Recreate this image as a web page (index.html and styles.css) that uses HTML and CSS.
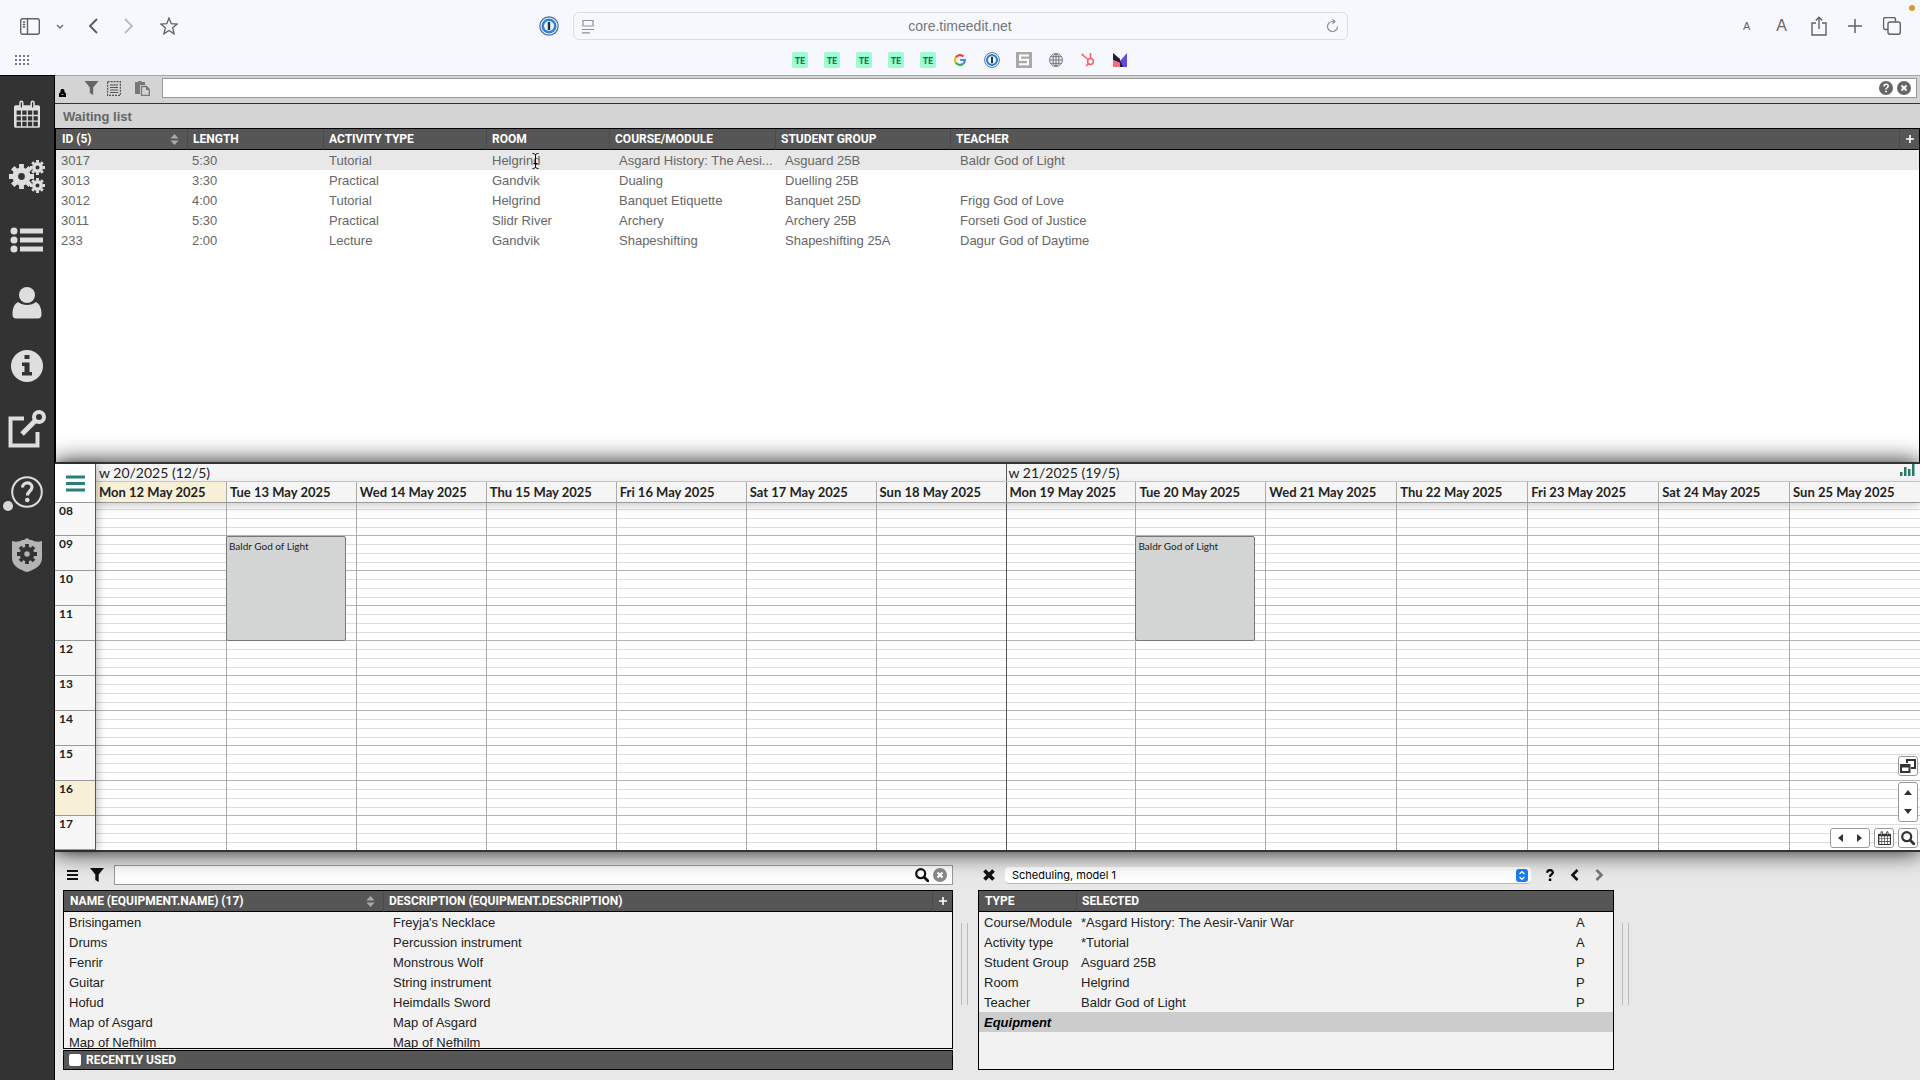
FILE: index.html
```html
<!DOCTYPE html>
<html lang="en">
<head>
  <meta charset="UTF-8" />
  <meta name="viewport" content="width=device-width, initial-scale=1.0"/>
  <title>TimeEdit - Scheduling</title>
  <link rel="stylesheet" href="styles.css">
</head>
<body>
  <!-- Shared icons -->
  <svg class="defs" width="0" height="0" aria-hidden="true">
    <symbol id="i-filter" viewBox="0 0 14 14"><path d="M0 0h14L8.700 6.500V14L5.300 12V6.500z" fill="currentColor"/></symbol>
    <symbol id="i-sort" viewBox="0 0 10 12"><path d="M5 0l4.500 5h-9zM5 12l4.500-5h-9z" fill="currentColor"/></symbol>
    <symbol id="i-plus" viewBox="0 0 8 8"><path d="M4 0v8M0 4h8" stroke="currentColor" stroke-width="1.600"/></symbol>
    <symbol id="i-close" viewBox="0 0 14 14"><circle cx="7" cy="7" r="7" fill="currentColor"/><path d="M4.500 4.500l5 5M9.500 4.500l-5 5" stroke="#fff" stroke-width="2"/></symbol>
    <symbol id="i-search" viewBox="0 0 14 14"><circle cx="5.700" cy="5.700" r="4.500" fill="none" stroke="currentColor" stroke-width="2.200"/><path d="M9 9l4 4" stroke="currentColor" stroke-width="2.800" stroke-linecap="round"/></symbol>
    <symbol id="i-onepass" viewBox="0 0 20 20"><circle cx="10" cy="10" r="9.200" fill="#fff" stroke="#4a6a9a" stroke-width="1.200"/><circle cx="10" cy="10" r="6.300" fill="#eaf4fd" stroke="#2f83d0" stroke-width="2.600"/><path d="M10 6v8" stroke="#1c2f4a" stroke-width="2.400"/></symbol>
    <symbol id="i-cal" viewBox="0 0 30 32">
      <path d="M2 6h4V3a2.500 2.500 0 0 1 5 0v3h8V3a2.500 2.500 0 0 1 5 0v3h4a2 2 0 0 1 2 2v22a2 2 0 0 1-2 2H2a2 2 0 0 1-2-2V8a2 2 0 0 1 2-2z" fill="currentColor"/>
      <path class="hole" d="M3 12h5v5H3zM9.500 12h5v5h-5zM16 12h5v5h-5zM22.500 12h5v5h-5zM3 18.500h5v5H3zM9.500 18.500h5v5h-5zM16 18.500h5v5h-5zM22.500 18.500h5v5h-5zM3 25h5v5H3zM9.500 25h5v5h-5zM16 25h5v5h-5zM22.500 25h5v5h-5zM7.800 2.500h1.400v6H7.800zM20.800 2.500h1.400v6h-1.400z"/>
    </symbol>
    <symbol id="i-gear" viewBox="-12 -12 24 24">
      <circle r="6" fill="none" stroke="currentColor" stroke-width="5.500"/>
      <path d="M0-8v-4M0 8v4M-8 0h-4M8 0h4M5.700-5.700l2.700-2.700M-5.700 5.700l-2.700 2.700M-5.700-5.700l-2.700-2.700M5.700 5.700l2.700 2.700" stroke="currentColor" stroke-width="4.600"/>
    </symbol>
  </svg>

  <!-- Browser bar -->
  <header class="browser">
    <div class="browser-row">
      <div class="browser-side">
        <button class="icon-btn sidebar-btn" aria-label="Sidebar"><svg width="20" height="17" viewBox="0 0 20 17" fill="none" stroke="#5f6166" stroke-width="1.400"><rect x="0.700" y="0.700" width="18.600" height="15.600" rx="2"/><path d="M7.500 1v15M2.800 4h2.400M2.800 6.500h2.400M2.800 9h2.400"/></svg></button>
        <button class="icon-btn chevron-btn" aria-label="Tab groups"><svg width="8" height="5" viewBox="0 0 8 5" fill="none" stroke="#777" stroke-width="1.600"><path d="M1 1l3 3 3-3"/></svg></button>
        <button class="icon-btn nav-btn" aria-label="Back"><svg width="10" height="16" viewBox="0 0 10 16" fill="none" stroke="#55575b" stroke-width="1.800"><path d="M9 1L2 8l7 7"/></svg></button>
        <button class="icon-btn nav-btn" aria-label="Forward"><svg width="10" height="16" viewBox="0 0 10 16" fill="none" stroke="#b9bbc0" stroke-width="1.800"><path d="M1 1l7 7-7 7"/></svg></button>
        <button class="icon-btn" aria-label="Bookmark"><svg width="18" height="18" viewBox="0 0 18 18" fill="none" stroke="#5f6166" stroke-width="1.300"><path d="M9 1l2.200 5.600 6 .4-4.600 3.800 1.500 6L9 13.500l-5.100 3.300 1.500-6L.8 7l6-.4z"/></svg></button>
      </div>
      <div class="address">
        <svg width="20" height="20"><use href="#i-onepass"/></svg>
        <div class="url-box">
          <svg width="12" height="15" viewBox="0 0 12 15" fill="none" stroke="#8d8f94" stroke-width="1.200"><path d="M1 7V1.500h10V7zM0 10.500h12M0 13.800h8"/></svg>
          <input type="text" class="url" value="core.timeedit.net" aria-label="Address">
          <button class="icon-btn" aria-label="Reload"><svg width="13" height="14" viewBox="0 0 13 14" fill="none" stroke="#8d8f94" stroke-width="1.200"><path d="M11.500 7.500a5 5 0 1 1-5-5h2M6.500.3l2.400 2.200-2.400 2.300"/></svg></button>
        </div>
      </div>
      <div class="browser-side right">
        <button class="icon-btn zoom-out" aria-label="Smaller text">A</button>
        <button class="icon-btn zoom-in" aria-label="Larger text">A</button>
        <button class="icon-btn" aria-label="Share"><svg width="16" height="20" viewBox="0 0 16 20" fill="none" stroke="#5f6166" stroke-width="1.400"><path d="M5 7H1v12h14V7h-4M8 13V1.500M4.800 4.500L8 1.300l3.200 3.200"/></svg></button>
        <button class="icon-btn" aria-label="New tab"><svg width="14" height="14" viewBox="0 0 14 14" stroke="#5f6166" stroke-width="1.500"><path d="M7 0v14M0 7h14"/></svg></button>
        <button class="icon-btn" aria-label="Tabs"><svg width="18" height="18" viewBox="0 0 18 18" fill="none" stroke="#5f6166" stroke-width="1.400"><rect x="5" y="5" width="12.300" height="12.300" rx="2"/><path d="M5 12.500H2.500a2 2 0 0 1-2-2v-8a2 2 0 0 1 2-2h8a2 2 0 0 1 2 2V5"/></svg></button>
      </div>
      <span class="mic-dot"></span>
    </div>
    <nav class="favorites">
      <button class="icon-btn apps" aria-label="Tab overview"><svg width="14" height="10" viewBox="0 0 14 10" fill="#77797e"><path d="M0 0h2v2H0zM4 0h2v2H4zM8 0h2v2H8zM12 0h2v2h-2zM0 4h2v2H0zM4 4h2v2H4zM8 4h2v2H8zM12 4h2v2h-2zM0 8h2v2H0zM4 8h2v2H4zM8 8h2v2H8zM12 8h2v2h-2z"/></svg></button>
      <a href="#" class="te">TE</a>
      <a href="#" class="te">TE</a>
      <a href="#" class="te">TE</a>
      <a href="#" class="te">TE</a>
      <a href="#" class="te">TE</a>
      <a href="#" aria-label="Google"><svg width="12" height="12" viewBox="0 0 12 12" fill="none" stroke-width="2.200"><path d="M1.800 3.500A4.900 4.900 0 0 1 9.500 2.600" stroke="#ea4335"/><path d="M1.800 3.500a4.900 4.900 0 0 0 0 5" stroke="#fbbc05"/><path d="M1.800 8.500a4.900 4.900 0 0 0 7.200 1.300" stroke="#34a853"/><path d="M9 9.800A4.900 4.900 0 0 0 10.900 6H6.200" stroke="#4285f4"/></svg></a>
      <a href="#" aria-label="1Password"><svg width="16" height="16"><use href="#i-onepass"/></svg></a>
      <a href="#" aria-label="S"><svg width="16" height="16" viewBox="0 0 16 16"><path fill="#a9a9a9" d="M0 0h16v16H0z"/><path d="M13 3.500H4v4.200h8v4.500H3" fill="none" stroke="#fff" stroke-width="2"/></svg></a>
      <a href="#" aria-label="Web"><svg width="14" height="14" viewBox="0 0 14 14" fill="none" stroke="#707277"><circle cx="7" cy="7" r="6.400"/><ellipse cx="7" cy="7" rx="3" ry="6.400"/><path d="M7 .6v12.800M.6 7h12.800M1.500 3.700h11M1.500 10.300h11"/></svg></a>
      <a href="#" aria-label="HubSpot"><svg width="14" height="14" viewBox="0 0 14 14" fill="none" stroke="#f0626c" stroke-width="1.500"><circle cx="9.500" cy="8.500" r="2.900"/><path d="M9.500 5.600V1.500M7.300 6.500L1.500 2M7.500 10.600L5 13"/><path d="M8.500 1h2M.5 1.500h2"/></svg></a>
      <a href="#" aria-label="Analytics"><svg width="14" height="14" viewBox="0 0 14 14"><path fill="#2a1733" d="M0 0l7 6 0 4-7-3z"/><path fill="#f0707c" d="M0 7l7 3v4H0z"/><path fill="#5c4ce0" d="M14 0v14H9L7 8z"/><path fill="#2a1733" d="M7 7l3 7H7z"/></svg></a>
    </nav>
  </header>

  <div class="app">
    <!-- Main menu -->
    <nav class="sidebar">
      <a href="#" aria-label="Calendar"><svg width="26" height="32"><use href="#i-cal"/></svg></a>
      <a href="#" aria-label="Settings"><svg width="36" height="34" viewBox="0 0 36 34"><use href="#i-gear" x="0" y="4" width="25" height="25"/><use href="#i-gear" x="21" y="0" width="15" height="15"/><use href="#i-gear" x="21" y="18" width="15" height="15"/></svg></a>
      <a href="#" aria-label="Lists"><svg width="34" height="26" viewBox="0 0 34 26" fill="currentColor"><circle cx="4" cy="4" r="3.500"/><circle cx="4" cy="13" r="3.500"/><circle cx="4" cy="22" r="3.500"/><path d="M10 1.500h23v5H10zM10 10.500h23v5H10zM10 19.500h23v5H10z"/></svg></a>
      <a href="#" aria-label="User"><svg width="30" height="32" viewBox="0 0 30 32" fill="currentColor"><circle cx="15" cy="8" r="8"/><path d="M6 15c5 4 13 4 18 0 4 2 5.500 7 5.500 12 0 4-2 4.500-4 4.500h-21c-2 0-4-.5-4-4.500C.500 22 2 17 6 15z"/></svg></a>
      <a href="#" aria-label="Information"><svg width="32" height="32" viewBox="0 0 32 32"><circle cx="16" cy="16" r="16" fill="currentColor"/><path class="hole" d="M13.500 5h5v4h-5zM11 12.500h7.500v9.500H21v3.500H11V22h2.500v-6H11z"/></svg></a>
      <a href="#" aria-label="Open external"><svg width="38" height="38" viewBox="0 0 38 38" fill="none" stroke="currentColor"><path d="M16 8.500H2.500V35.500h27V22" stroke-width="4"/><path d="M14 24L27 11" stroke-width="5"/><circle cx="31" cy="7" r="5" stroke-width="4"/></svg></a>
      <a href="#" class="help" aria-label="Help"><svg width="32" height="32" viewBox="0 0 32 32" fill="none" stroke="currentColor"><circle cx="16" cy="16" r="14.800" stroke-width="2"/><path d="M11.500 11.500c0-6 9.500-6 9.500-.5 0 4-4.500 4-4.500 8.500" stroke-width="3.200"/><circle cx="16.300" cy="24" r="2.300" fill="currentColor" stroke="none"/></svg></a>
      <a href="#" class="admin" aria-label="Administration"><svg width="30" height="34" viewBox="0 0 30 34"><path d="M0 3c4 1.500 8 .5 10-1h2l3-2 3 2h2c2 1.500 6 2.500 10 1v17c0 8-8 12-15 14C8 32 0 28 0 20z" fill="currentColor"/><use class="dark" href="#i-gear" x="5" y="6" width="20" height="20"/></svg></a>
    </nav>

    <main class="main">
      <!-- Waiting list -->
      <section class="waiting">
        <div class="waiting-tools">
          <button class="icon-btn lock" aria-label="Lock"><svg width="7" height="8" viewBox="0 0 7 8"><path d="M1.500 3V1.500l1-1.500h2l1 1.500V3L7 4.500V8H0V4.500z" fill="#000"/><path d="M2.500 5.500h2" stroke="#aaa"/></svg></button>
          <button class="icon-btn" aria-label="Filter"><svg width="15" height="14"><use href="#i-filter"/></svg></button>
          <button class="icon-btn" aria-label="Select all"><svg width="14" height="15" viewBox="0 0 14 15" fill="none" stroke="#555" stroke-width="1.200"><rect x="0.600" y="0.600" width="12.800" height="13.800" stroke-dasharray="2 1"/><path d="M3 4h8M3 6.500h8M3 9h8M3 11.500h8"/></svg></button>
          <button class="icon-btn paste" aria-label="Paste"><svg width="15" height="15" viewBox="0 0 15 15" fill="#777"><path d="M0 1h3l1-1h2l1 1h3v3H5v9H0z"/><path d="M6.500 5.500h5L14.300 8.500v5.800H6.500z" fill="#d3d4d3" stroke="#777" stroke-width="1.300"/><path d="M11 5v4h4z"/></svg></button>
          <div class="search-box">
            <input type="text" aria-label="Search waiting list">
            <button class="icon-btn" aria-label="Search help"><svg width="14" height="14" viewBox="0 0 14 14"><circle cx="7" cy="7" r="7" fill="currentColor"/><path d="M5 5.500c0-3 4.200-3 4.200-.4C9.200 6.800 7 6.700 7 8.500" fill="none" stroke="#fff" stroke-width="1.500"/><circle cx="7" cy="10.600" r="1" fill="#fff"/></svg></button>
            <button class="icon-btn" aria-label="Clear"><svg width="14" height="14"><use href="#i-close"/></svg></button>
          </div>
        </div>
        <h2 class="waiting-title">Waiting list</h2>
        <div class="waiting-body">
          <table class="grid">
            <colgroup><col class="c-id"><col class="c-length"><col class="c-activity"><col class="c-room"><col class="c-course"><col class="c-group"><col><col class="c-add"></colgroup>
            <thead>
              <tr>
                <th><div class="sortable">ID (5)<svg width="9" height="11"><use href="#i-sort"/></svg></div></th>
                <th>LENGTH</th>
                <th>ACTIVITY TYPE</th>
                <th>ROOM</th>
                <th>COURSE/MODULE</th>
                <th>STUDENT GROUP</th>
                <th>TEACHER</th>
                <th class="add"><button class="icon-btn" aria-label="Add column"><svg width="8" height="8"><use href="#i-plus"/></svg></button></th>
              </tr>
            </thead>
            <tbody>
              <tr class="active"><td>3017</td><td>5:30</td><td>Tutorial</td><td class="pointed">Helgrind<svg class="ibeam" width="7" height="16" viewBox="0 0 7 16" fill="none" stroke="#000"><path d="M.5.500c2 0 3 .5 3 2v11c0 1.500-1 2-3 2M6.500.500c-2 0-3 .5-3 2v11c0 1.500 1 2 3 2M1.500 10.500h4"/></svg></td><td>Asgard History: The Aesi...</td><td>Asguard 25B</td><td>Baldr God of Light</td><td></td></tr>
              <tr><td>3013</td><td>3:30</td><td>Practical</td><td>Gandvik</td><td>Dualing</td><td>Duelling 25B</td><td></td><td></td></tr>
              <tr><td>3012</td><td>4:00</td><td>Tutorial</td><td>Helgrind</td><td>Banquet Etiquette</td><td>Banquet 25D</td><td>Frigg God of Love</td><td></td></tr>
              <tr><td>3011</td><td>5:30</td><td>Practical</td><td>Slidr River</td><td>Archery</td><td>Archery 25B</td><td>Forseti God of Justice</td><td></td></tr>
              <tr><td>233</td><td>2:00</td><td>Lecture</td><td>Gandvik</td><td>Shapeshifting</td><td>Shapeshifting 25A</td><td>Dagur God of Daytime</td><td></td></tr>
            </tbody>
          </table>
        </div>
      </section>

      <!-- Calendar -->
      <section class="calendar">
        <div class="cal-left">
          <button class="icon-btn cal-menu" aria-label="Calendar menu"><svg width="19" height="17" viewBox="0 0 19 17" stroke="#2a8078" stroke-width="3"><path d="M0 2h19M0 8.500h19M0 15h19"/></svg></button>
          <div class="hours">
            <div>08</div><div>09</div><div>10</div><div>11</div><div>12</div><div>13</div><div>14</div><div>15</div><div class="now">16</div><div>17</div>
          </div>
        </div>
        <div class="cal-main">
          <div class="weeks">
            <div>w 20/2025 (12/5)</div>
            <div>w 21/2025 (19/5)</div>
            <button class="icon-btn stats" aria-label="Statistics"><svg width="15" height="12" viewBox="0 0 15 12" fill="#2a7a68"><path d="M0 8h2.500v4H0zM4 3h2.500v9H4zM8 5h2.500v7H8zM12 0h2.500v12H12z"/></svg></button>
          </div>
          <div class="days">
            <div class="today">Mon 12 May 2025</div><div>Tue 13 May 2025</div><div>Wed 14 May 2025</div><div>Thu 15 May 2025</div><div>Fri 16 May 2025</div><div>Sat 17 May 2025</div><div>Sun 18 May 2025</div>
            <div>Mon 19 May 2025</div><div>Tue 20 May 2025</div><div>Wed 21 May 2025</div><div>Thu 22 May 2025</div><div>Fri 23 May 2025</div><div>Sat 24 May 2025</div><div>Sun 25 May 2025</div>
          </div>
          <div class="slots">
            <div></div><div><div class="event">Baldr God of Light</div></div><div></div><div></div><div></div><div></div><div></div>
            <div></div><div><div class="event">Baldr God of Light</div></div><div></div><div></div><div></div><div></div><div></div>
          </div>
        </div>
        <div class="cal-controls">
          <button class="ctl" aria-label="Pop out"><svg width="16" height="14" viewBox="0 0 16 14" fill="none" stroke="#333" stroke-width="2"><path d="M7 4V1h8v8h-4M1 6h8.500v7H1z"/><path d="M1 7h8.500" stroke-width="3"/></svg></button>
          <div class="ctl-group vertical">
            <button class="icon-btn" aria-label="Up"><svg width="8" height="5" viewBox="0 0 8 5"><path d="M4 0l4 5H0z" fill="#333"/></svg></button>
            <button class="icon-btn" aria-label="Down"><svg width="8" height="5" viewBox="0 0 8 5"><path d="M4 5l4-5H0z" fill="#333"/></svg></button>
          </div>
          <div class="ctl-row">
            <div class="ctl-group">
              <button class="icon-btn" aria-label="Previous"><svg width="5" height="8" viewBox="0 0 5 8"><path d="M0 4l5-4v8z" fill="#333"/></svg></button>
              <button class="icon-btn" aria-label="Next"><svg width="5" height="8" viewBox="0 0 5 8"><path d="M5 4L0 0v8z" fill="#333"/></svg></button>
            </div>
            <button class="ctl light" aria-label="Go to date"><svg width="13" height="14"><use href="#i-cal"/></svg></button>
            <button class="ctl" aria-label="Zoom"><svg width="14" height="14"><use href="#i-search"/></svg></button>
          </div>
        </div>
      </section>

      <!-- Lower panels -->
      <section class="lower">
        <div class="objects">
          <div class="tools">
            <button class="icon-btn menu" aria-label="Menu"><svg width="11" height="10" viewBox="0 0 11 10" stroke="#111" stroke-width="1.800"><path d="M0 1h11M0 5h11M0 9h11"/></svg></button>
            <button class="icon-btn filter" aria-label="Filter"><svg width="14" height="14"><use href="#i-filter"/></svg></button>
            <div class="search-box">
              <input type="text" aria-label="Search equipment">
              <button class="icon-btn find" aria-label="Search"><svg width="14" height="14"><use href="#i-search"/></svg></button>
              <button class="icon-btn clear" aria-label="Clear"><svg width="14" height="14"><use href="#i-close"/></svg></button>
            </div>
          </div>
          <div class="list">
            <table class="grid">
              <colgroup><col class="c-name"><col><col class="c-add"></colgroup>
              <thead>
                <tr>
                  <th><div class="sortable">NAME (EQUIPMENT.NAME) (17)<svg width="9" height="11"><use href="#i-sort"/></svg></div></th>
                  <th>DESCRIPTION (EQUIPMENT.DESCRIPTION)</th>
                  <th class="add"><button class="icon-btn" aria-label="Add column"><svg width="8" height="8"><use href="#i-plus"/></svg></button></th>
                </tr>
              </thead>
              <tbody>
                <tr><td>Brisingamen</td><td>Freyja's Necklace</td><td></td></tr>
                <tr><td>Drums</td><td>Percussion instrument</td><td></td></tr>
                <tr><td>Fenrir</td><td>Monstrous Wolf</td><td></td></tr>
                <tr><td>Guitar</td><td>String instrument</td><td></td></tr>
                <tr><td>Hofud</td><td>Heimdalls Sword</td><td></td></tr>
                <tr><td>Map of Asgard</td><td>Map of Asgard</td><td></td></tr>
                <tr><td>Map of Nefhilm</td><td>Map of Nefhilm</td><td></td></tr>
              </tbody>
            </table>
          </div>
          <label class="recent"><input type="checkbox"> RECENTLY USED</label>
        </div>
        <div class="handle"></div>
        <div class="selection">
          <div class="tools">
            <button class="icon-btn" aria-label="Clear selection"><svg width="12" height="12" viewBox="0 0 12 12" stroke="#111" stroke-width="3.800"><path d="M1.500 1.500l9 9M10.500 1.500l-9 9"/></svg></button>
            <div class="select-box">
              <select aria-label="Scheduling model"><option>Scheduling, model 1</option></select>
              <svg width="12" height="13" viewBox="0 0 12 13" fill="none"><rect width="12" height="13" rx="3" fill="#1a7df0"/><path d="M3.500 5L6 2.700 8.500 5M3.500 8L6 10.300 8.500 8" stroke="#fff" stroke-width="1.300"/></svg>
            </div>
            <button class="icon-btn" aria-label="Help"><svg width="8" height="12" viewBox="0 0 8 12" fill="none"><path d="M1.200 3.800C1.200.3 6.800.3 6.800 3.500 6.800 5.500 4 5.500 4 8" stroke="#000" stroke-width="2.200"/><path d="M2.800 9.500h2.500V12H2.800z" fill="#000"/></svg></button>
            <button class="icon-btn" aria-label="Previous"><svg width="9" height="12" viewBox="0 0 9 12" fill="none" stroke="#111" stroke-width="2.600"><path d="M7.500 1L2.500 6l5 5"/></svg></button>
            <button class="icon-btn" aria-label="Next"><svg width="9" height="12" viewBox="0 0 9 12" fill="none" stroke="#777" stroke-width="2.600"><path d="M1.500 1l5 5-5 5"/></svg></button>
          </div>
          <div class="list">
            <table class="grid">
              <colgroup><col class="c-type"><col><col class="c-flag"></colgroup>
              <thead>
                <tr><th>TYPE</th><th colspan="2">SELECTED</th></tr>
              </thead>
              <tbody>
                <tr><td>Course/Module</td><td>*Asgard History: The Aesir-Vanir War</td><td>A</td></tr>
                <tr><td>Activity type</td><td>*Tutorial</td><td>A</td></tr>
                <tr><td>Student Group</td><td>Asguard 25B</td><td>P</td></tr>
                <tr><td>Room</td><td>Helgrind</td><td>P</td></tr>
                <tr><td>Teacher</td><td>Baldr God of Light</td><td>P</td></tr>
                <tr class="current"><td>Equipment</td><td></td><td></td></tr>
              </tbody>
            </table>
          </div>
        </div>
        <div class="handle"></div>
      </section>
    </main>
  </div>
</body>
</html>
```

FILE: styles.css
```css
:root {
  --dark: #333;
  --head: #565656;
  --bar: #d3d4d3;
  --panel: #f2f2f2;
  --today: #f7efd6;
  --line: #aaa;
}

* {
  box-sizing: border-box;
  margin: 0;
  padding: 0;
}

body {
  display: flex;
  flex-direction: column;
  min-height: 100vh;
  font-family: 'Liberation Sans', Arial, sans-serif;
  font-size: 13px;
  color: #222;
  background: #e8e8e8;
}

svg {
  display: block;
  flex: none;
}

.defs {
  position: absolute;
}

.icon-btn {
  display: flex;
  align-items: center;
  justify-content: center;
  background: none;
  border: none;
  color: inherit;
  cursor: pointer;
}

input, select {
  font: inherit;
  color: inherit;
  outline: none;
}

/* Browser bar */
.browser {
  background: #f7f8fd;
  height: 75px;
}

.browser-row {
  position: relative;
  display: flex;
  align-items: center;
  padding: 12px 19px 0 20px;
}

.browser-side {
  flex: 1;
  display: flex;
  align-items: center;
}

.browser-side.right {
  justify-content: flex-end;
  gap: 21px;
  color: #666;
}

.sidebar-btn {
  margin-right: 16px;
}

.chevron-btn {
  margin-right: 24px;
}

.nav-btn {
  margin-right: 26px;
}

.zoom-out {
  margin-right: 5px;
  font-size: 11px;
}

.zoom-in {
  margin-right: 3px;
  font-size: 16px;
}

.address {
  display: flex;
  align-items: center;
  gap: 14px;
  width: 43%;
  margin-right: 34px;
}

.url-box {
  flex: 1;
  display: flex;
  align-items: center;
  height: 28px;
  padding: 0 8px;
  border: 1px solid #dcdde2;
  border-radius: 6px;
}

.url {
  flex: 1;
  min-width: 0;
  border: none;
  background: none;
  color: #75777b;
  font-size: 14px;
  text-align: center;
}

.mic-dot {
  position: absolute;
  top: 5px;
  right: 5px;
  width: 6px;
  height: 6px;
  border-radius: 50%;
  background: #d99a2b;
}

.favorites {
  position: relative;
  display: flex;
  justify-content: center;
  gap: 16px;
  padding-top: 12px;
}

.favorites a {
  display: flex;
  align-items: center;
  justify-content: center;
  width: 16px;
  height: 16px;
  text-decoration: none;
}

.favorites .te {
  background: #9dfbd0;
  color: #0c7a4c;
  font: 900 9px Lato, sans-serif;
  border-radius: 2px;
}

.apps {
  position: absolute;
  left: 15px;
  bottom: 3px;
}

/* Main menu */
.app {
  flex: 1;
  display: flex;
}

.sidebar {
  position: relative;
  z-index: 2;
  display: flex;
  flex-direction: column;
  width: 55px;
  padding-top: 6px;
  background: var(--dark);
  border-right: 1px solid #000;
  border-top: 1px solid #000;
}

.sidebar a {
  position: relative;
  display: flex;
  align-items: center;
  justify-content: center;
  height: 63px;
  color: #dedede;
}

.sidebar .admin {
  color: #b4b4b4;
}

.hole {
  fill: var(--dark);
}

.dark {
  color: var(--dark);
}

.help::after {
  content: '';
  position: absolute;
  left: 3px;
  bottom: 12px;
  width: 10px;
  height: 10px;
  border-radius: 50%;
  background: #d8d8d8;
}

.main {
  flex: 1;
  min-width: 0;
  display: flex;
  flex-direction: column;
}

/* Tables */
.grid {
  width: 100%;
  table-layout: fixed;
  border-collapse: separate;
  border-spacing: 0;
}

.grid th {
  height: 21px;
  padding-left: 5px;
  background: var(--head);
  border-bottom: 1px solid #000;
  border-left: 1px solid #4a4a4a;
  color: #fff;
  font: bold 12px Roboto, sans-serif;
  text-align: left;
  white-space: nowrap;
}

.grid th:first-child {
  padding-left: 6px;
  border-left: none;
}

.grid th.add {
  padding: 0;
}

.add .icon-btn {
  width: 100%;
}

.grid td {
  height: 20px;
  padding-top: 2px;
  padding-left: 5px;
  line-height: 18px;
  white-space: nowrap;
}

.sortable {
  display: flex;
  align-items: center;
  justify-content: space-between;
  padding-right: 8px;
}

.sortable svg {
  color: #aaa;
}

.c-id { width: 131px; }
.c-length { width: 136px; }
.c-activity { width: 163px; }
.c-room { width: 123px; }
.c-course { width: 166px; }
.c-group { width: 175px; }
.c-add { width: 20px; }
.c-name { width: 319px; }
.c-type { width: 97px; }
.c-flag { width: 42px; }

.search-box {
  flex: 1;
  display: flex;
  align-items: center;
  gap: 4px;
  height: 20px;
  padding-right: 5px;
  background: #fff;
  border: 1px solid #999;
}

.search-box input {
  flex: 1;
  min-width: 0;
  height: 100%;
  border: none;
  padding: 0 4px;
}

/* Waiting list */
.waiting {
  flex: 1;
  display: flex;
  flex-direction: column;
  color: #666;
  background: var(--bar);
}

.waiting-tools {
  display: flex;
  align-items: center;
  gap: 8px;
  height: 29px;
  padding: 0 3px 3px 4px;
  border-top: 1px solid #a3a5ad;
  border-bottom: 1px solid #333;
}

.waiting-tools .lock {
  align-self: flex-end;
  margin: 0 10px 3px 0;
}

.waiting-tools .paste {
  margin: 0 4px 0 6px;
}

.waiting-title {
  height: 25px;
  padding-left: 8px;
  border-bottom: 1px solid #000;
  font-size: 13px;
  line-height: 26px;
}

.waiting-body {
  flex: 1;
  background: #fff;
  border-left: 1px solid #000;
  border-right: 1px solid #000;
}

.waiting .active td {
  background: #e8e8e8;
}

.waiting td:nth-child(n+3) {
  padding-left: 6px;
}

.waiting td:nth-child(n+5) {
  padding-left: 10px;
}

.waiting td.pointed {
  position: relative;
}

.ibeam {
  position: absolute;
  left: 46px;
  top: 3px;
}

/* Calendar */
.calendar {
  position: relative;
  display: flex;
  z-index: 1;
  background: #fff;
  border-top: 2px solid var(--dark);
  border-bottom: 2px solid var(--dark);
  box-shadow: 0 0 22px rgba(0, 0, 0, 0.9);
  font-family: Lato, sans-serif;
}

.cal-left {
  width: 41px;
  border-right: 1px solid #555;
  background: #f7f7f7;
  box-shadow: 2px 0 8px rgba(0, 0, 0, 0.25);
  z-index: 1;
}

.cal-menu {
  width: 100%;
  height: 39px;
  background: #fff;
  border-bottom: 1px solid #999;
}

.hours {
  display: grid;
  grid-template-rows: 33px repeat(8, 35px) 34px;
}

.hours div {
  padding-left: 4px;
  border-bottom: 1px solid #999;
  font-size: 12px;
  font-weight: bold;
  line-height: 16px;
}

.hours .now {
  background: var(--today);
}

.cal-main {
  flex: 1;
  min-width: 0;
}

.weeks {
  position: relative;
  display: grid;
  grid-template-columns: 910fr 915fr;
  height: 18px;
  background: #f5f5f5;
  border-bottom: 1px solid #ccc;
}

.weeks div {
  padding-left: 3px;
  font-size: 14px;
  line-height: 17px;
}

.weeks div + div {
  padding-left: 2px;
  border-left: 1px solid #555;
}

.stats {
  position: absolute;
  right: 5px;
  top: 0;
}

.days,
.slots {
  display: grid;
  grid-template-columns: repeat(9, 130fr) repeat(5, 131fr);
}

.days {
  position: relative;
  background: #f5f5f5;
  border-bottom: 1px solid #999;
  box-shadow: 0 3px 8px rgba(0, 0, 0, 0.2);
}

.days div {
  height: 20px;
  padding-left: 3px;
  font-size: 13px;
  font-weight: bold;
  line-height: 20px;
  white-space: nowrap;
}

.days div + div,
.slots > div + div {
  border-left: 1px solid var(--line);
}

.days div:nth-child(8),
.slots > div:nth-child(8) {
  border-left-color: #555;
}

.days .today {
  background: var(--today);
}

/* One 35px tile per hour, with a line each quarter */
.slots {
  height: 347px;
  background-image: linear-gradient(
    transparent 8px, #ddd 8px, #ddd 9px,
    transparent 9px, transparent 17px, #ddd 17px, #ddd 18px,
    transparent 18px, transparent 26px, #ddd 26px, #ddd 27px,
    transparent 27px, transparent 34px, #b4b4b4 34px);
  background-size: 100% 35px;
  background-position: 0 -2px;
}

.slots > div {
  position: relative;
}

.event {
  position: absolute;
  top: 33px;
  left: -1px;
  width: 93%;
  height: 105px;
  padding: 3px 2px;
  background: #d3d5d4;
  border: 1px solid #777;
  border-radius: 2px;
  font-size: 10px;
}

.cal-controls {
  position: absolute;
  right: 2px;
  bottom: 2px;
  display: flex;
  flex-direction: column;
  align-items: flex-end;
  gap: 6px;
  z-index: 1;
}

.ctl-row {
  display: flex;
  gap: 4px;
}

.ctl,
.ctl-group {
  display: flex;
  align-items: center;
  justify-content: center;
  min-width: 20px;
  height: 20px;
  background: #fff;
  border: 1px solid #999;
  border-radius: 3px;
  color: #333;
}

.ctl.light {
  --dark: #fff;
}

.ctl-group {
  width: 40px;
  justify-content: space-around;
}

.ctl-group.vertical {
  flex-direction: column;
  width: 20px;
  height: 40px;
}

/* Lower panels */
.lower {
  display: flex;
  padding: 13px 0 10px 8px;
}

.objects {
  display: flex;
  flex-direction: column;
  width: 48%;
  max-width: 890px;
}

.tools {
  display: flex;
  align-items: center;
  height: 20px;
  margin-bottom: 5px;
}

.tools .menu {
  margin: 0 12px 0 4px;
}

.tools .filter {
  margin-right: 10px;
  color: #111;
}

.find {
  color: #111;
}

.clear {
  color: #888;
}

.list {
  flex: 1;
  background: var(--panel);
  border: 1px solid #000;
}

.objects .list {
  height: 159px;
  flex: none;
  overflow: hidden;
}

.objects td:nth-child(2) {
  padding-left: 10px;
}

.recent {
  display: flex;
  align-items: center;
  gap: 5px;
  height: 20px;
  margin-top: 1px;
  padding-left: 5px;
  background: var(--head);
  border: 1px solid #000;
  color: #fff;
  font: bold 12px Roboto, sans-serif;
}

.recent input {
  appearance: none;
  width: 12px;
  height: 12px;
  background: #fff;
  border-radius: 2px;
}

.handle {
  width: 7px;
  height: 82px;
  margin: 58px 10px 0 8px;
  border-left: 1px solid #bbb;
  border-right: 1px solid #bbb;
}

.selection {
  display: flex;
  flex-direction: column;
  width: 35%;
  max-width: 636px;
}

.selection .tools {
  gap: 12px;
  padding: 0 8px 0 4px;
}

.selection .tools .icon-btn {
  width: 13px;
}

.select-box {
  position: relative;
  flex: 1;
  margin-left: -2px;
}

.select-box select {
  appearance: none;
  width: 100%;
  height: 17px;
  padding-left: 7px;
  background: #fff;
  border: none;
  border-bottom: 1px solid #bbb;
  border-radius: 4px;
  font: 11px Inter, sans-serif;
  color: #000;
}

.select-box svg {
  position: absolute;
  right: 3px;
  top: 2px;
  pointer-events: none;
}

.current td {
  background: #ccc;
  color: #000;
  font-weight: bold;
  font-style: italic;
}
```
